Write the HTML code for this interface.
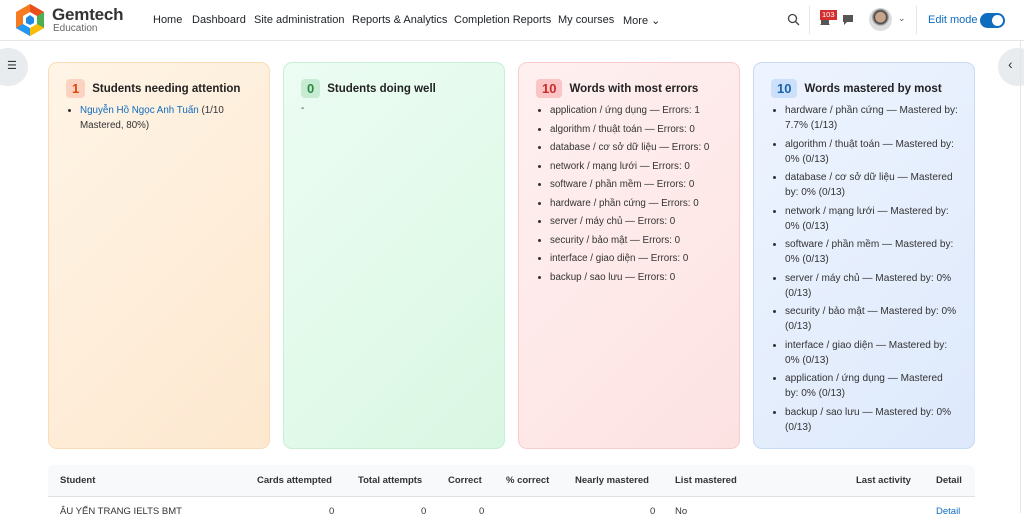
<!DOCTYPE html>
<html><head><meta charset="utf-8"><style>
*{box-sizing:border-box;margin:0;padding:0}
body{width:1024px;height:513px;overflow:hidden;background:#fff;font-family:"Liberation Sans","Noto Sans CJK SC",sans-serif;color:#1d2125;position:relative}
.nav{position:absolute;top:0;left:0;width:1024px;height:41px;border-bottom:1px solid #e3e5e8;background:#fff}
.nav a{position:absolute;top:14px;font-size:11px;color:#1d2125;text-decoration:none}
.brand{position:absolute;left:52px;top:5px;font-size:17px;font-weight:bold;color:#333;letter-spacing:-.2px}
.brand2{position:absolute;left:53px;top:23px;font-size:10px;color:#666}
.card{position:absolute;top:62px;width:222px;height:387px;border-radius:9px;border:1px solid;padding:16px 16px 0 17px}
.t{display:flex;align-items:center;font-size:11.5px;font-weight:bold;color:#222}
.b{display:inline-block;height:19px;padding:0 6px;border-radius:4px;font-size:13px;line-height:19px;margin-right:7px;font-weight:bold}
ul{margin:5px 0 0 14px;font-size:9.8px;line-height:15px;color:#333}
li{margin-bottom:3.5px}
.blue ul{font-size:10.1px}
.th{position:absolute;top:465px;left:48px;width:927px;height:32px;background:#f8f9fa;border-bottom:1px solid #dee2e6;border-radius:6px 6px 0 0}
.th span{position:absolute;top:10px;font-size:9.5px;font-weight:bold;color:#333}
.r span{position:absolute;top:506px;font-size:9.5px;color:#333}
</style></head><body>
<div class="nav">
<svg style="position:absolute;left:14px;top:3px" width="32" height="34" viewBox="0 0 32 34"><polygon points="16,1 30,9 30,25 16,33 2,25 2,9" fill="#f47b20"/><polygon points="16,1 30,9 16,17" fill="#e94e1b"/><polygon points="30,9 30,25 16,17" fill="#4caf50"/><polygon points="30,25 16,33 16,17" fill="#fbbc05"/><polygon points="16,33 2,25 16,17" fill="#2196f3"/><polygon points="16,9 23,13 23,21 16,25 9,21 9,13" fill="#fff"/><polygon points="16,12 20,15 20,20 16,22 12,20 12,15" fill="#1e88e5"/></svg>
<div class="brand">Gemtech</div><div class="brand2">Education</div>
<a style="left:153px">Home</a><a style="left:192px">Dashboard</a><a style="left:254px">Site administration</a><a style="left:352px">Reports &amp; Analytics</a><a style="left:454px">Completion Reports</a><a style="left:558px">My courses</a><a style="left:623px">More ⌄</a>
<svg style="position:absolute;left:787px;top:13px" width="13" height="13" viewBox="0 0 13 13"><circle cx="5.5" cy="5.5" r="4" fill="none" stroke="#444" stroke-width="1.3"/><line x1="8.5" y1="8.5" x2="12" y2="12" stroke="#444" stroke-width="1.3"/></svg>
<div style="position:absolute;left:809px;top:6px;width:1px;height:28px;background:#e3e5e8"></div>
<svg style="position:absolute;left:819px;top:14px" width="12" height="13"><path d="M2 10V6a4 4 0 0 1 8 0v4l1 1H1z" fill="#555"/></svg>
<div style="position:absolute;left:820px;top:10px;background:#d32f2f;color:#fff;font-size:7.5px;padding:0 2px;line-height:10px">103</div>
<svg style="position:absolute;left:842px;top:14px" width="12" height="12"><path d="M1 1h10v7H5l-3 3V8H1z" fill="#555"/></svg>
<div style="position:absolute;left:869px;top:8px;width:23px;height:23px;border-radius:50%;background:radial-gradient(circle at 50% 40%,#c8a58a 0 5px,#3a3a3a 6px,#ddd 9px)"></div>
<a style="left:898px;top:13px;font-size:9px;color:#555">⌄</a>
<div style="position:absolute;left:916px;top:6px;width:1px;height:28px;background:#e3e5e8"></div>
<a style="left:928px;color:#0f6cbf">Edit mode</a>
<div style="position:absolute;left:980px;top:13px;width:25px;height:15px;border-radius:8px;background:#0f6cbf"><div style="position:absolute;right:2px;top:2px;width:11px;height:11px;border-radius:50%;background:#fff"></div></div>
</div>
<div style="position:absolute;left:-12px;top:48px;width:40px;height:38px;border-radius:19px;background:#e9ecef;font-size:11px;color:#333;padding:11px 0 0 19px">☰</div>
<div style="position:absolute;left:998px;top:48px;width:40px;height:38px;border-radius:19px;background:#e9ecef;font-size:14px;color:#333;padding:8px 0 0 10px">‹</div>
<div style="position:absolute;left:1020px;top:41px;width:1px;height:472px;background:#e3e5e8"></div>

<div class="card" style="left:48px;background:linear-gradient(135deg,#fff4e6,#fde8cf);border-color:#fbdcb6">
<div class="t"><span class="b" style="background:#fcd3c0;color:#d9480f">1</span>Students needing attention</div>
<ul><li><span style="color:#0f6cbf">Nguyễn Hồ Ngọc Anh Tuấn</span> (1/10 Mastered, 80%)</li></ul></div>
<div class="card" style="left:283px;background:linear-gradient(135deg,#ecfdf3,#daf7e3);border-color:#c9efd6">
<div class="t"><span class="b" style="background:#c7ecd3;color:#2b8a3e">0</span>Students doing well</div>
<div style="font-size:10px;margin-top:5px;color:#333">-</div></div>
<div class="card" style="left:518px;background:linear-gradient(135deg,#fff0f0,#fde2e2);border-color:#f8cccc">
<div class="t"><span class="b" style="background:#fbc5c5;color:#c92a2a">10</span>Words with most errors</div>
<ul><li>application / ứng dụng — Errors: 1</li><li>algorithm / thuật toán — Errors: 0</li><li>database / cơ sở dữ liệu — Errors: 0</li><li>network / mạng lưới — Errors: 0</li><li>software / phần mềm — Errors: 0</li><li>hardware / phần cứng — Errors: 0</li><li>server / máy chủ — Errors: 0</li><li>security / bảo mật — Errors: 0</li><li>interface / giao diện — Errors: 0</li><li>backup / sao lưu — Errors: 0</li></ul></div>
<div class="card blue" style="left:753px;background:linear-gradient(135deg,#eef4ff,#dde9fb);border-color:#c8daf5">
<div class="t"><span class="b" style="background:#cde0fb;color:#1864ab">10</span>Words mastered by most</div>
<ul><li>hardware / phần cứng — Mastered by: 7.7% (1/13)</li><li>algorithm / thuật toán — Mastered by: 0% (0/13)</li><li>database / cơ sở dữ liệu — Mastered by: 0% (0/13)</li><li>network / mạng lưới — Mastered by: 0% (0/13)</li><li>software / phần mềm — Mastered by: 0% (0/13)</li><li>server / máy chủ — Mastered by: 0% (0/13)</li><li>security / bảo mật — Mastered by: 0% (0/13)</li><li>interface / giao diện — Mastered by: 0% (0/13)</li><li>application / ứng dụng — Mastered by: 0% (0/13)</li><li>backup / sao lưu — Mastered by: 0% (0/13)</li></ul></div>

<div class="th"><span style="left:12px">Student</span><span style="left:209px">Cards attempted</span><span style="left:310px">Total attempts</span><span style="left:400px">Correct</span><span style="left:458px">% correct</span><span style="left:527px">Nearly mastered</span><span style="left:627px">List mastered</span><span style="left:808px">Last activity</span><span style="left:888px">Detail</span></div>
<div class="r"><span style="left:60px">ÂU YẾN TRANG IELTS BMT</span><span style="left:329px">0</span><span style="left:421px">0</span><span style="left:479px">0</span><span style="left:650px">0</span><span style="left:675px">No</span><span style="left:936px;color:#0f6cbf">Detail</span></div>
</body></html>
